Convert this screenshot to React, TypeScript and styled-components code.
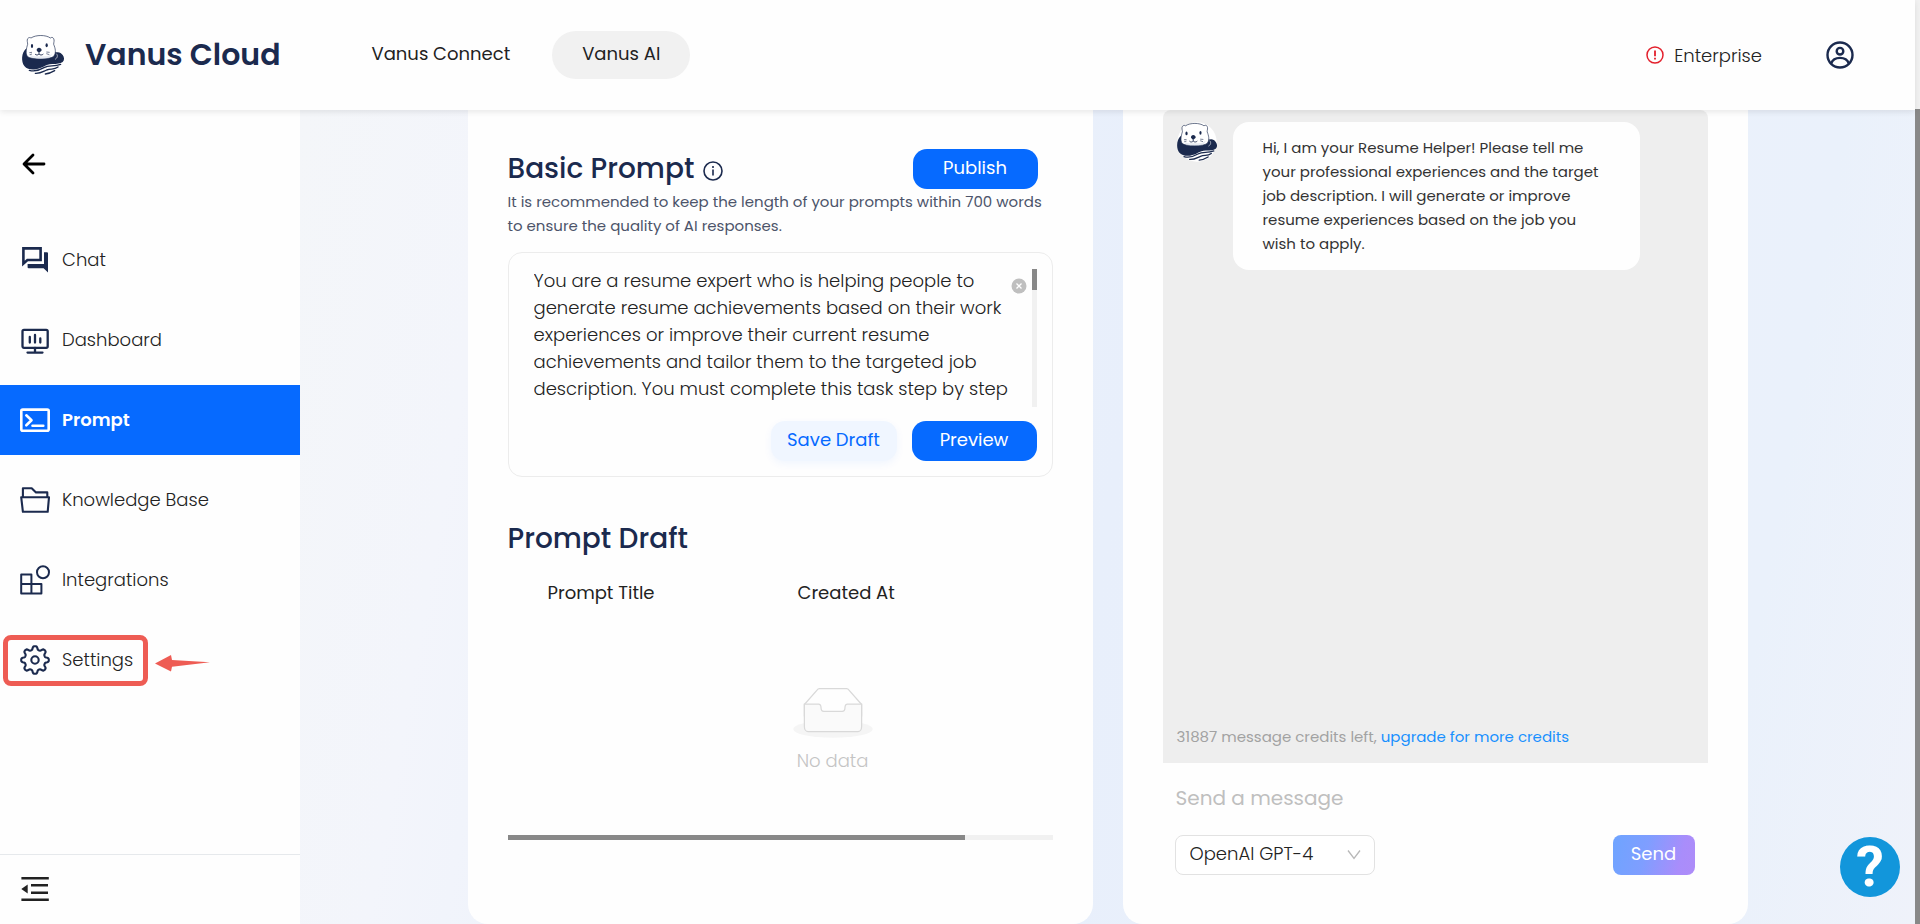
import React from "react";
import styled, { createGlobalStyle, css } from "styled-components";

const NAVY = "#1b2a4e";
const BLUE = "#066aff";
const RED = "#ee5c54";

const GlobalStyle = createGlobalStyle`
  *, *::before, *::after { box-sizing: border-box; }
  body {
    margin: 0;
    font-family: Poppins, Inter, "Open Sans", sans-serif;
    font-size: 18px;
    font-weight: 300;
    color: #222;
    background: #fff;
  }
  button, input, select, textarea { font: inherit; color: inherit; margin: 0; }
  button { cursor: pointer; border: 0; padding: 0; background: none; }
  a { text-decoration: none; color: inherit; }
  h1, h2, p, ul { margin: 0; padding: 0; }
  svg { display: block; flex: none; }
`;

const Shell = styled.div`
  display: flex;
  height: 100vh;
  overflow: hidden;
`;

const Page = styled.div`
  flex: 1;
  min-width: 0;
  display: flex;
  flex-direction: column;
`;

const PageScrollbar = styled.div`
  width: 5px;
  background: #f1f1f1;
  padding-top: 109px;
`;

const PageThumb = styled.div`
  height: 100%;
  background: #888;
`;

/* Header */

const Header = styled.header`
  position: relative;
  z-index: 2;
  flex: none;
  display: flex;
  align-items: center;
  height: 110px;
  padding: 0 61px 0 18px;
  background: #fefefe;
  box-shadow: 0 2px 6px rgba(0, 0, 0, 0.09);
`;

const Brand = styled.a`
  display: flex;
  align-items: center;
  gap: 17px;
  font-size: 30px;
  font-weight: 600;
  color: ${NAVY};
`;

const Nav = styled.nav`
  display: flex;
  align-items: center;
  gap: 12px;
  margin-left: 61px;
`;

const NavLink = styled.a<{ $active?: boolean }>`
  display: flex;
  align-items: center;
  height: 48px;
  padding: 0 30px 4px;
  border-radius: 24px;
  font-weight: 400;
  background: ${(p) => (p.$active ? "#f1f1f1" : "transparent")};
`;

const Account = styled.div`
  display: flex;
  align-items: center;
  margin-left: auto;
  gap: 64px;
`;

const Plan = styled.a`
  display: flex;
  align-items: center;
  gap: 10px;
`;

/* Sidebar */

const Body = styled.div`
  flex: 1;
  min-height: 0;
  display: flex;
`;

const Sidebar = styled.aside`
  width: 300px;
  flex: none;
  display: flex;
  flex-direction: column;
  background: #fefefe;
`;

const BackButton = styled.button`
  width: 24px;
  height: 24px;
  margin: 42px 0 0 22px;
`;

const Menu = styled.ul`
  flex: 1;
  list-style: none;
  display: flex;
  flex-direction: column;
  gap: 10px;
  margin-top: 49px;
`;

const MenuEntry = styled.li`
  position: relative;
`;

const MenuLink = styled.a<{ $active?: boolean }>`
  display: flex;
  align-items: center;
  gap: 12px;
  height: 70px;
  padding-left: 20px;
  ${(p) =>
    p.$active
      ? css`
          background: ${BLUE};
          color: #fff;
          font-weight: 600;
        `
      : css`
          background: transparent;
          svg {
            color: ${NAVY};
          }
        `}
`;

const MenuText = styled.span`
  padding-bottom: 2px;
`;

const Highlight = styled.div`
  position: absolute;
  left: 3px;
  top: 10px;
  width: 145px;
  height: 51px;
  border: 5px solid ${RED};
  border-radius: 8px;
  pointer-events: none;
`;

const Pointer = styled.svg`
  position: absolute;
  left: 155px;
  top: 28px;
`;

const SidebarFoot = styled.div`
  height: 70px;
  border-top: 1px solid #e6e9ec;
  padding: 19px 20px;
`;

/* Main area */

const Main = styled.main`
  flex: 1;
  min-width: 0;
  overflow: hidden;
  padding: 0 40px;
  background: linear-gradient(100deg, #f4f6f9 0%, #f3f5fb 12%, #edf2fb 25%, #e8effb 50%, #ebf1fb 75%, #eaf1fb 88%, #eff2fa 100%);
`;

const Columns = styled.div`
  display: grid;
  grid-template-columns: 1fr 1fr;
  gap: 30px;
  max-width: 1280px;
  height: 100%;
  margin: 0 auto;
`;

const Card = styled.section`
  min-width: 0;
  background: #fefefe;
  border-radius: 0 0 20px 20px;
  padding: 0 40px;
`;

const TitleRow = styled.div`
  display: flex;
  align-items: center;
  justify-content: space-between;
  height: 40px;
  margin-top: 39px;
  padding-right: 15px;
`;

const Title = styled.h2`
  display: flex;
  align-items: center;
  gap: 9px;
  font-size: 28px;
  line-height: 42px;
  font-weight: 500;
  color: ${NAVY};
  svg {
    margin-top: 4px;
  }
`;

const Hint = styled.p`
  margin-top: 1px;
  font-size: 15px;
  line-height: 24px;
  font-weight: 400;
  color: #4c546a;
`;

const Button = styled.button<{ $soft?: boolean }>`
  width: ${(p) => (p.$soft ? 126 : 125)}px;
  height: 40px;
  padding-bottom: 3px;
  border-radius: 14px;
  font-weight: 400;
  ${(p) =>
    p.$soft
      ? css`
          background: #f0f6ff;
          color: ${BLUE};
          box-shadow: 0 3px 8px rgba(6, 106, 255, 0.06);
        `
      : css`
          background: ${BLUE};
          color: #fff;
        `}
`;

const Editor = styled.div`
  margin-top: 14px;
  padding: 14px 15px 15px 25px;
  border: 1px solid #ececec;
  border-radius: 14px;
`;

const EditorRow = styled.div`
  position: relative;
  display: flex;
  align-items: flex-end;
`;

const PromptText = styled.textarea`
  flex: 1;
  min-width: 0;
  height: 140px;
  padding: 0 20px 0 0;
  border: 0;
  outline: 0;
  resize: none;
  overflow: hidden;
  background: none;
  line-height: 27px;
`;

const ScrollTrack = styled.div<{ $horizontal?: boolean }>`
  background: #f1f1f1;
  ${(p) =>
    p.$horizontal
      ? css`
          height: 5px;
        `
      : css`
          width: 5px;
          height: 138px;
        `}
`;

const ScrollThumb = styled.div<{ $horizontal?: boolean }>`
  background: #888;
  ${(p) =>
    p.$horizontal
      ? css`
          height: 5px;
          width: 84%;
        `
      : css`
          height: 21px;
        `}
`;

const ClearButton = styled.button`
  position: absolute;
  right: 10px;
  top: 11px;
`;

const EditorActions = styled.div`
  display: flex;
  justify-content: flex-end;
  gap: 15px;
  margin-top: 14px;
`;

const DraftTitle = styled(Title)`
  margin-top: 41px;
`;

const TableWrap = styled.div`
  height: 275px;
`;

const DraftTable = styled.table`
  width: 100%;
  table-layout: fixed;
  border-collapse: collapse;
  th {
    height: 66px;
    padding: 0 0 2px 40px;
    font-weight: 400;
    text-align: left;
  }
  td {
    height: 198px;
    padding: 11px 0 0 105px;
    text-align: center;
    color: #c4c4c4;
  }
  svg {
    margin: 0 auto 8px;
  }
`;

const WideCol = styled.col`
  width: 250px;
`;

/* Chat */

const ChatCard = styled(Card)`
  display: flex;
  flex-direction: column;
  padding-bottom: 49px;
`;

const Conversation = styled.div`
  flex: 1;
  display: flex;
  flex-direction: column;
  justify-content: space-between;
  padding: 12px 14px 14px;
  background: #eee;
  border-radius: 8px 8px 0 0;
`;

const Message = styled.div`
  display: flex;
  align-items: flex-start;
  gap: 16px;
`;

const Bubble = styled.p`
  width: 407px;
  padding: 14px 30px;
  border-radius: 16px;
  background: #fefefe;
  font-size: 15px;
  line-height: 24px;
  font-weight: 400;
  color: #333;
`;

const Credits = styled.p`
  font-size: 15px;
  line-height: 24px;
  font-weight: 400;
  color: #a2a2a2;
  a {
    color: #1890ff;
  }
`;

const MessageInput = styled.input`
  height: 40px;
  margin: 15px 13px 17px;
  padding: 0;
  border: 0;
  outline: 0;
  background: none;
  font-size: 20px;
  font-weight: 400;
  &::placeholder {
    color: #bfbfbf;
    opacity: 1;
  }
`;

const Composer = styled.div`
  display: flex;
  justify-content: space-between;
  padding: 0 13px 0 12px;
`;

const SelectWrap = styled.div`
  position: relative;
  width: 200px;
`;

const ModelSelect = styled.select`
  appearance: none;
  width: 100%;
  height: 40px;
  padding: 0 34px 3px 14px;
  border: 1px solid #e2e2e2;
  border-radius: 8px;
  background: #fff;
`;

const SelectArrow = styled.svg`
  position: absolute;
  right: 14px;
  top: 14px;
  pointer-events: none;
`;

const SendButton = styled.button`
  width: 82px;
  height: 40px;
  padding-bottom: 3px;
  border-radius: 8px;
  font-weight: 400;
  color: #fff;
  background: linear-gradient(105deg, #6ea4ff 0%, #7f9eff 40%, #a98dfb 80%, #ae8cf8 100%);
`;

const HelpButton = styled.button`
  position: fixed;
  right: 20px;
  bottom: 27px;
  z-index: 3;
  width: 60px;
  height: 60px;
  border-radius: 50%;
  background: #1296db;
  color: #fff;
  font-family: Roboto, "Liberation Sans", sans-serif;
  font-size: 56px;
  line-height: 60px;
  font-weight: 700;
`;

/* Drawings */

function Otter({ size, badge }: { size: number; badge?: boolean }) {
  return (
    <svg width={size} height={size} viewBox={badge ? "12 12 126 126" : "0 0 150 150"} aria-hidden="true">
      {badge && <circle cx="75" cy="75" r="62" fill="#fff" />}
      <path d="M24 56C10 68 9 94 19 108c8 10 22 12 34 10 22-3 28-15 50-16 14 0 24-1 31-6 6-5 5-14 0-21-4-7-12-10-18-8z" fill={NAVY} />
      <path d="M29 43c0-6-3-12 0-17 3-4 7-4 10-2 14-10 45-10 58 0 4-3 8-2 10 2 3 5 0 11 0 17 5 12 8 25 1 35-10 12-70 12-80 1-6-9-3-24 1-36z" fill="#fff" stroke={NAVY} strokeWidth="2" />
      <path d="M34 72c8 8 18 7 32 7s26 1 36-8c-3 15-20 16-35 16s-30-1-33-15z" fill="#b9c6da" opacity=".35" />
      <path d="M115 71c5 5 4 13-4 17" fill="none" stroke="#fff" strokeWidth="1.800" />
      <ellipse cx="42" cy="48" rx="3.400" ry="6" fill={NAVY} />
      <ellipse cx="86" cy="46" rx="3.400" ry="6" fill={NAVY} />
      <path d="M56 60c0-3 3-7 7-7s8 4 8 7-5 6-8 7c-3-1-7-4-7-7z" fill={NAVY} />
      <path d="M63 66v6M51 72c3 4 9 4 12 0 3 4 9 4 13 0" fill="none" stroke={NAVY} strokeWidth="2.600" />
      <path d="M34 68l8-1M35 74l7-2M85 66l10 1M85 71l9 3" stroke={NAVY} strokeWidth="1.800" />
      <path d="M34 121c18 5 32-1 44-8 16-9 28-2 50-10M52 130c16 1 24-6 34-10 14-5 22 0 34-9M82 132c12-1 18-4 28-10" fill="none" stroke={NAVY} strokeWidth="4" strokeLinecap="round" />
    </svg>
  );
}

const Icon = styled.svg.attrs({ viewBox: "0 0 30 30", width: 30, height: 30, fill: "none", stroke: "currentColor", "aria-hidden": true })`
  stroke-linejoin: round;
  stroke-linecap: round;
`;

const gearPath =
  Array.from({ length: 144 }, (_, i) => {
    const a = (i / 144) * Math.PI * 2;
    const r = 12.1 + 1.8 * Math.tanh(1.8 * Math.cos(8 * a));
    return `${i ? "L" : "M"}${(15 + r * Math.cos(a)).toFixed(2)} ${(15 + r * Math.sin(a)).toFixed(2)}`;
  }).join("") + "Z";

const menu = [
  {
    label: "Chat",
    icon: (
      <Icon strokeWidth="2.600">
        <path d="M3.400 3.400h17.200v11.600H7.400l-4 3.600z" strokeLinejoin="miter" />
        <path d="M24 7.200h3q1 0 1 1v19.300l-4.400-4.200H8.600q-1 0-1-1v-3.400H24z" fill="currentColor" stroke="none" />
      </Icon>
    ),
  },
  {
    label: "Dashboard",
    icon: (
      <Icon strokeWidth="2.300">
        <rect x="2.500" y="4.800" width="25.200" height="18" rx="1.500" />
        <path d="M15 23v4M7.500 27.600h15M9.800 12v5.600M15 10v7.600M20.300 13.500v4.100" />
      </Icon>
    ),
  },
  {
    label: "Prompt",
    active: true,
    icon: (
      <Icon strokeWidth="2.600">
        <rect x="1.300" y="4.600" width="27.400" height="21.200" rx="1.500" />
        <path d="M6.300 10.300l5.200 5-5.200 5M12.500 20.700h10.800" />
      </Icon>
    ),
  },
  {
    label: "Knowledge Base",
    icon: (
      <Icon strokeWidth="2.100">
        <path d="M2.900 11.700V3.200h8.800l4.300 4.200h11.300v4.300M1.200 12.200h27.800l-1.300 14.600H2.900z" />
      </Icon>
    ),
  },
  {
    label: "Integrations",
    icon: (
      <Icon strokeWidth="2">
        <path d="M1.200 9.400h10.200v19.200H1.200zM1.200 19h20.200v9.600H11.400" />
        <circle cx="23" cy="7.300" r="6" />
      </Icon>
    ),
  },
  {
    label: "Settings",
    marked: true,
    icon: (
      <Icon strokeWidth="2.100">
        <path d={gearPath} />
        <circle cx="15" cy="15" r="3.700" />
      </Icon>
    ),
  },
];

const promptValue =
  "You are a resume expert who is helping people to generate resume achievements based on their work experiences or improve their current resume achievements and tailor them to the targeted job description. You must complete this task step by step";

export default function App() {
  return (
    <Shell>
      <GlobalStyle />
      <Page>
        <Header>
          <Brand href="#">
            <Otter size={50} />
            Vanus Cloud
          </Brand>
          <Nav>
            <NavLink href="#connect">Vanus Connect</NavLink>
            <NavLink href="#ai" $active>
              Vanus AI
            </NavLink>
          </Nav>
          <Account>
            <Plan href="#plan">
              <svg width="18" height="18" viewBox="0 0 18 18" fill="none" stroke="#e3202c" strokeWidth="1.500" aria-hidden="true">
                <circle cx="9" cy="9" r="8" />
                <path d="M9 4.500v5.700M9 11.800v1.800" strokeWidth="1.800" />
              </svg>
              Enterprise
            </Plan>
            <button aria-label="Account">
              <svg width="28" height="28" viewBox="0 0 28 28" fill="none" stroke={NAVY} strokeWidth="2.400">
                <circle cx="14" cy="14" r="12.500" />
                <circle cx="14" cy="10.200" r="3.300" />
                <path d="M5.200 22.400c1.400-4 4.600-5.500 8.800-5.500s7.400 1.500 8.800 5.500" />
              </svg>
            </button>
          </Account>
        </Header>
        <Body>
          <Sidebar>
            <BackButton aria-label="Back">
              <svg width="24" height="24" viewBox="0 0 24 24" fill="none" stroke="#000" strokeWidth="2.800" strokeLinecap="round" strokeLinejoin="round">
                <path d="M22 12H2.500M11 3L2 12l9 9" />
              </svg>
            </BackButton>
            <Menu>
              {menu.map((m) => (
                <MenuEntry key={m.label}>
                  <MenuLink href={"#" + m.label} $active={m.active}>
                    {m.icon}
                    <MenuText>{m.label}</MenuText>
                  </MenuLink>
                  {m.marked && (
                    <>
                      <Highlight />
                      <Pointer width="56" height="20" viewBox="0 0 56 20" fill={RED} aria-hidden="true">
                        <path d="M0 10.500L16 2l1 5 38 2.200-38 4.600-1 4.700z" />
                      </Pointer>
                    </>
                  )}
                </MenuEntry>
              ))}
            </Menu>
            <SidebarFoot>
              <button aria-label="Collapse menu">
                <svg width="30" height="30" viewBox="0 0 30 30" fill="none" stroke="#222" strokeWidth="2.400">
                  <path d="M1.400 4.300h27.400M11 11.300h17M11 18.700h17M1.400 25.700h27.400" />
                  <path d="M1.300 15l6.400-4.400v8.800z" fill="#222" stroke="none" />
                </svg>
              </button>
            </SidebarFoot>
          </Sidebar>
          <Main>
            <Columns>
              <Card>
                <TitleRow>
                  <Title>
                    Basic Prompt
                    <svg width="20" height="20" viewBox="0 0 20 20" fill="none" stroke={NAVY} strokeWidth="1.600" aria-hidden="true">
                      <circle cx="10" cy="10" r="9" />
                      <path d="M10 8.600v6M10 5v2" />
                    </svg>
                  </Title>
                  <Button>Publish</Button>
                </TitleRow>
                <Hint>It is recommended to keep the length of your prompts within 700 words to ensure the quality of AI responses.</Hint>
                <Editor>
                  <EditorRow>
                    <PromptText aria-label="Basic Prompt" defaultValue={promptValue} />
                    <ClearButton aria-label="Clear">
                      <svg width="16" height="16" viewBox="0 0 16 16">
                        <circle cx="8" cy="8" r="7.500" fill="#bfbfbf" />
                        <path d="M5.500 5.500l5 5M10.500 5.500l-5 5" stroke="#fff" strokeWidth="1.300" />
                      </svg>
                    </ClearButton>
                    <ScrollTrack>
                      <ScrollThumb />
                    </ScrollTrack>
                  </EditorRow>
                  <EditorActions>
                    <Button $soft>Save Draft</Button>
                    <Button>Preview</Button>
                  </EditorActions>
                </Editor>
                <DraftTitle>Prompt Draft</DraftTitle>
                <TableWrap>
                  <DraftTable>
                    <colgroup>
                      <WideCol />
                      <col />
                    </colgroup>
                    <thead>
                      <tr>
                        <th>Prompt Title</th>
                        <th>Created At</th>
                      </tr>
                    </thead>
                    <tbody>
                      <tr>
                        <td colSpan={2}>
                          <svg width="80" height="51" viewBox="0 0 64 41" aria-hidden="true">
                            <ellipse cx="32" cy="33" rx="32" ry="7" fill="#f5f5f5" />
                            <g stroke="#d9d9d9">
                              <path d="M55 12.760L44.854 1.258C44.367.474 43.656 0 42.907 0H21.093c-.749 0-1.460.474-1.947 1.257L9 12.761V22h46v-9.240z" transform="translate(0 .5)" fill="#fefefe" />
                              <path d="M41.613 15.931c0-1.605.994-2.930 2.227-2.931H55v18.137C55 33.260 53.680 35 52.050 35h-40.100C10.320 35 9 33.259 9 31.137V13h11.160c1.233 0 2.227 1.323 2.227 2.928v.022c0 1.605 1.005 2.901 2.237 2.901h14.752c1.232 0 2.237-1.308 2.237-2.913v-.007z" fill="#fafafa" />
                            </g>
                          </svg>
                          No data
                        </td>
                      </tr>
                    </tbody>
                  </DraftTable>
                </TableWrap>
                <ScrollTrack $horizontal>
                  <ScrollThumb $horizontal />
                </ScrollTrack>
              </Card>
              <ChatCard>
                <Conversation>
                  <Message>
                    <Otter size={40} badge />
                    <Bubble>
                      Hi, I am your Resume Helper! Please tell me your professional experiences and the target job description. I will generate or improve resume experiences based on the job you wish to apply.
                    </Bubble>
                  </Message>
                  <Credits>
                    31887 message credits left, <a href="#upgrade">upgrade for more credits</a>
                  </Credits>
                </Conversation>
                <MessageInput aria-label="Message" placeholder="Send a message" />
                <Composer>
                  <SelectWrap>
                    <ModelSelect aria-label="Model">
                      <option>OpenAI GPT-4</option>
                    </ModelSelect>
                    <SelectArrow width="14" height="12" viewBox="0 0 14 12" fill="none" stroke="#b8b8b8" strokeWidth="1.300" aria-hidden="true">
                      <path d="M1 1.500l6 8 6-8" />
                    </SelectArrow>
                  </SelectWrap>
                  <SendButton>Send</SendButton>
                </Composer>
              </ChatCard>
            </Columns>
          </Main>
        </Body>
      </Page>
      <PageScrollbar>
        <PageThumb />
      </PageScrollbar>
      <HelpButton aria-label="Help">?</HelpButton>
    </Shell>
  );
}
